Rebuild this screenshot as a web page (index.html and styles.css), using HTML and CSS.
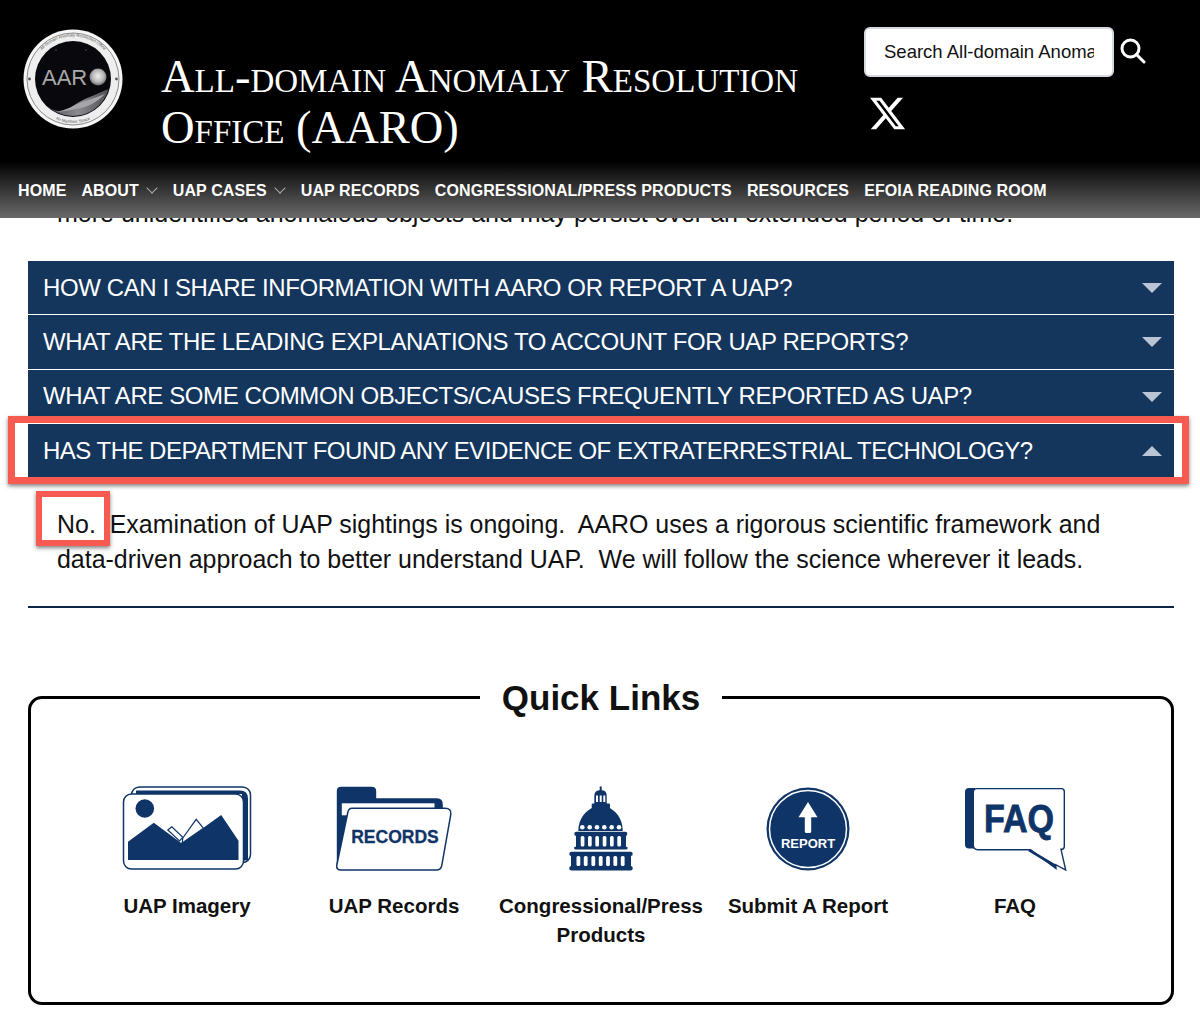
FILE: index.html
```html
<!DOCTYPE html>
<html lang="en">
<head>
    <meta charset="UTF-8">
    <meta name="viewport" content="width=device-width, initial-scale=1.0">
    <title>All-domain Anomaly Resolution Office (AARO)</title>
    <link rel="stylesheet" href="styles.css">
</head>
<body>
    <header class="site-header">
        <div class="header-top">
            <svg class="logo" viewBox="0 0 100 104" aria-label="AARO seal">
                <defs>
                    <radialGradient id="orb" cx="50%" cy="45%" r="55%">
                        <stop offset="0%" stop-color="#f0f0f0"/>
                        <stop offset="65%" stop-color="#b5b5b5"/>
                        <stop offset="100%" stop-color="#666"/>
                    </radialGradient>
                    <linearGradient id="wave" x1="0" x2="1" y1="0" y2="0">
                        <stop offset="0%" stop-color="#3a3a40"/>
                        <stop offset="55%" stop-color="#8a8a90"/>
                        <stop offset="100%" stop-color="#45454a"/>
                    </linearGradient>
                    <clipPath id="disc"><circle cx="50" cy="52" r="37"/></clipPath>
                    <path id="seal-top" d="M7.500 52a42.500 42.500 0 0 1 85 0"/>
                    <path id="seal-bottom" d="M21 85a44 44 0 0 0 58 0"/>
                </defs>
                <circle cx="50" cy="52" r="49.500" fill="#f6f6f6"/>
                <circle cx="50" cy="52" r="46" fill="#eeeeee" stroke="#444" stroke-width=".6"/>
                <circle cx="50" cy="52" r="38" fill="#08080d"/>
                <g clip-path="url(#disc)">
                    <path d="M12 70c8 5 16 14 24 14 10 0 18-9 28-13 9-3 17-8 26-10v12c-8 3-16 13-26 15-10 2-20 3-30 2-10-2-18-10-22-20z" fill="url(#wave)"/>
                    <path d="M30 85c12 0 22-8 32-11 8-2 14-5 20-7-6 6-14 12-24 14-10 2-20 4-28 4z" fill="#a5a5aa"/>
                </g>
                <circle cx="33" cy="23" r=".7" fill="#666"/>
                <circle cx="63" cy="23" r=".7" fill="#666"/>
                <circle cx="6.500" cy="52" r="1.400" fill="#555"/>
                <circle cx="93.500" cy="52" r="1.400" fill="#555"/>
                <circle cx="75" cy="50" r="8.500" fill="url(#orb)"/>
                <text class="logo-word" x="19" y="58">AAR</text>
                <text class="logo-ring"><textPath href="#seal-top" startOffset="50%" text-anchor="middle">All-domain Anomaly Resolution Office</textPath></text>
                <text class="logo-ring"><textPath href="#seal-bottom" startOffset="50%" text-anchor="middle">Air Maritime Space</textPath></text>
            </svg>
            <h1 class="site-title">All-domain Anomaly Resolution Office (AARO)</h1>
            <div class="header-tools">
                <div class="search-row">
                    <input class="search-input" type="text" placeholder="Search All-domain Anomaly Resolution Office">
                    <svg class="search-icon" viewBox="0 0 26 26" aria-label="Search">
                        <circle cx="10.500" cy="10.500" r="8.500"/>
                        <path d="M16.500 16.500l7.500 7.500"/>
                    </svg>
                </div>
                <svg class="x-icon" viewBox="0 0 24 24" aria-label="X">
                    <path d="M18.244 2.25h3.308l-7.227 8.26 8.502 11.24H16.17l-5.214-6.817L4.99 21.75H1.68l7.73-8.835L1.254 2.25H8.08l4.713 6.231zm-1.161 17.52h1.833L7.084 4.126H5.117z"/>
                </svg>
            </div>
        </div>
        <nav class="main-nav">
            <a href="#">HOME</a>
            <a href="#" class="has-sub">ABOUT</a>
            <a href="#" class="has-sub">UAP CASES</a>
            <a href="#">UAP RECORDS</a>
            <a href="#">CONGRESSIONAL/PRESS PRODUCTS</a>
            <a href="#">RESOURCES</a>
            <a href="#">EFOIA READING ROOM</a>
        </nav>
    </header>

    <main class="content">
        <p class="answer clipped">more unidentified anomalous objects and may persist over an extended period of time.</p>

        <div class="accordion">
            <div class="acc-row">HOW CAN I SHARE INFORMATION WITH AARO OR REPORT A UAP?</div>
            <div class="acc-row">WHAT ARE THE LEADING EXPLANATIONS TO ACCOUNT FOR UAP REPORTS?</div>
            <div class="acc-row">WHAT ARE SOME COMMON OBJECTS/CAUSES FREQUENTLY REPORTED AS UAP?</div>
            <div class="acc-row open marked">HAS THE DEPARTMENT FOUND ANY EVIDENCE OF EXTRATERRESTRIAL TECHNOLOGY?</div>
        </div>
        <p class="answer"><span class="marked-word">No.</span>&nbsp; Examination of UAP sightings is ongoing.&nbsp; AARO uses a rigorous scientific framework and data-driven approach to better understand UAP.&nbsp; We will follow the science wherever it leads.</p>
        <hr class="rule">

        <fieldset class="quick-links">
            <legend>Quick Links</legend>
            <div class="link-grid">
                <a href="#" class="link-item">
                    <svg class="link-icon" viewBox="0 0 130 86">
                        <rect x="9.500" y="2" width="119" height="75.500" rx="8" fill="#fff" stroke="#0f3468" stroke-width="1.500"/>
                        <path d="M14 5.500h104q8 0 8 8v62h-6V9H14z" fill="#0f3468"/>
                        <rect x="1.500" y="9" width="120" height="75" rx="8" fill="#fff" stroke="#0f3468" stroke-width="1.500"/>
                        <circle cx="22.800" cy="23.500" r="9.300" fill="#0f3468"/>
                        <path d="M6 75V56.700l25.800-19 27.400 20.300 21.600-14.700L99.200 30l17.300 25.700V75z" fill="#0f3468"/>
                        <path d="M45.800 45l4-3.300 11 10.600-3.300 3.700zM60.800 53L74.200 34.300l7.300 9-21.300 14.700z" fill="#fff" stroke="#0f3468" stroke-width="1.200"/>
                    </svg>
                    <span>UAP Imagery</span>
                </a>
                <a href="#" class="link-item">
                    <svg class="link-icon" viewBox="0 0 130 86">
                        <path d="M7.800 80V6q0-4.300 4.300-4.300h30.600q4.500 0 4.500 4.500v7.100h60.800q5.800 0 5.800 6V30H20L9 82z" fill="#0f3468"/>
                        <rect x="12.800" y="18.300" width="92.700" height="12" fill="#fff"/>
                        <path d="M23 23.300h93q6.500 0 5.800 6l-9 51q-.8 4.700-5.500 4.700H12q-5 0-4.200-5l11-52.500q.8-4.200 4.200-4.200z" fill="#fff" stroke="#0f3468" stroke-width="1.500"/>
                        <text class="icon-word records-word" x="66" y="57.700">RECORDS</text>
                    </svg>
                    <span>UAP Records</span>
                </a>
                <a href="#" class="link-item">
                    <svg class="link-icon" viewBox="0 0 130 86">
                        <rect x="63.700" y="1.500" width="2" height="5" fill="#0f3468"/>
                        <path d="M58.300 20V11q0-6 6.400-6t6 6v9z" fill="#0f3468"/>
                        <path d="M60 10.500h2v6.500h-2zM63.700 10.500h2v6.500h-2zM67.300 10.500h2v6.500h-2z" fill="#fff"/>
                        <rect x="55.700" y="18.500" width="18.300" height="5" rx="1" fill="#0f3468"/>
                        <path d="M42.300 46c0-13 8-21 16-24h13c8 3 15.400 11 15.400 24z" fill="#0f3468"/>
                        <g fill="#fff">
                            <circle cx="46.300" cy="42.300" r="2.300"/><circle cx="53.700" cy="42.300" r="2.300"/><circle cx="61" cy="42.300" r="2.300"/>
                            <circle cx="68.300" cy="42.300" r="2.300"/><circle cx="75.700" cy="42.300" r="2.300"/><circle cx="83" cy="42.300" r="2.300"/>
                        </g>
                        <rect x="38.300" y="46.700" width="53" height="4.300" rx="2" fill="#0f3468"/>
                        <rect x="40" y="50" width="50" height="12" fill="#0f3468"/>
                        <rect x="38" y="61.700" width="53.700" height="2.800" rx="1.400" fill="#0f3468"/>
                        <rect x="33.300" y="66.700" width="63.400" height="4.300" rx="2" fill="#0f3468"/>
                        <rect x="35" y="70" width="60" height="12" fill="#0f3468"/>
                        <rect x="33.300" y="81" width="63.400" height="4.500" rx="2" fill="#0f3468"/>
                        <g fill="#fff">
                            <rect x="44.700" y="51" width="3.700" height="10.500" rx="1.500"/><rect x="52" y="51" width="3.700" height="10.500" rx="1.500"/>
                            <rect x="59.300" y="51" width="3.700" height="10.500" rx="1.500"/><rect x="66.700" y="51" width="3.700" height="10.500" rx="1.500"/>
                            <rect x="74" y="51" width="3.700" height="10.500" rx="1.500"/><rect x="81.300" y="51" width="3.700" height="10.500" rx="1.500"/>
                            <rect x="40.500" y="71" width="3.800" height="10" rx="1.500"/><rect x="47.800" y="71" width="3.800" height="10" rx="1.500"/>
                            <rect x="55.400" y="71" width="3.800" height="10" rx="1.500"/><rect x="62.800" y="71" width="3.800" height="10" rx="1.500"/>
                            <rect x="70.100" y="71" width="3.800" height="10" rx="1.500"/><rect x="77.400" y="71" width="3.800" height="10" rx="1.500"/>
                            <rect x="84.800" y="71" width="3.800" height="10" rx="1.500"/>
                        </g>
                    </svg>
                    <span>Congressional/Press Products</span>
                </a>
                <a href="#" class="link-item">
                    <svg class="link-icon" viewBox="0 0 130 86">
                        <circle cx="65" cy="44" r="41.500" fill="#0f3468"/>
                        <circle cx="65" cy="44" r="38.500" fill="none" stroke="#fff" stroke-width="1.500"/>
                        <path d="M65 17l9.500 15.300h-6.300v14.200q0 1.500-1.500 1.500h-3.400q-1.500 0-1.500-1.500V32.300h-6.300z" fill="#fff"/>
                        <text class="icon-word report-word" x="65" y="63">REPORT</text>
                    </svg>
                    <span>Submit A Report</span>
                </a>
                <a href="#" class="link-item">
                    <svg class="link-icon" viewBox="0 0 130 86">
                        <path d="M25 3H19q-4 0-4 4v52.500q0 4 4 4h6z" fill="#0f3468"/>
                        <path d="M27 3.600h84.500q2.800 0 2.800 2.800v55q0 2.900-3.300 2.900l4.700 20.700-10-5.300.3 3.800-25.500-18.800H28q-4.700 0-4.700-4.700V7.300q0-3.700 3.700-3.700z" fill="#fff" stroke="#0f3468" stroke-width="1.400"/>
                        <path d="M80 64.300l25.800 15.200.2 3.600L78 66z" fill="#0f3468"/>
                        <text class="icon-word faq-word" x="34" y="46.700" textLength="70" lengthAdjust="spacingAndGlyphs">FAQ</text>
                    </svg>
                    <span>FAQ</span>
                </a>
            </div>
        </fieldset>
    </main>
</body>
</html>
```

FILE: styles.css
```css
* {
    box-sizing: border-box;
}
body {
    margin: 0;
    font-family: "Liberation Sans", Arial, sans-serif;
    background: white;
    color: #111;
}
.site-header {
    position: relative;
    z-index: 2;
    height: 218px;
    background: linear-gradient(#000 74%, #6a6a6a 100%);
    color: white;
}
.header-top {
    display: flex;
    height: 172px;
    padding: 27px 0 0 23px;
}
.logo {
    width: 100px;
    height: 104px;
    flex-shrink: 0;
}
.logo-word {
    font-size: 22px;
    fill: #a8a8a8;
}
.logo-ring {
    font-size: 4.200px;
    fill: #555;
}
.site-title {
    width: 703px;
    margin: 24px 0 0 38px;
    font-family: "Liberation Serif", "Times New Roman", serif;
    font-size: 46.500px;
    font-weight: normal;
    font-variant: small-caps;
    line-height: 51px;
}
.search-row {
    display: flex;
    align-items: center;
    gap: 6px;
}
.search-input {
    width: 250px;
    height: 50px;
    padding: 0 18px;
    border: 2px solid #d5d8de;
    border-radius: 6px;
    background: white;
    font-family: "Liberation Sans", Arial, sans-serif;
    font-size: 18.500px;
}
.search-input::placeholder {
    color: #111;
    opacity: 1;
}
.search-icon {
    width: 26px;
    height: 26px;
    margin-top: -2px;
    fill: none;
    stroke: white;
    stroke-width: 3;
    stroke-linecap: round;
}
.x-icon {
    display: block;
    width: 39px;
    height: 39px;
    margin: 17px 0 0 4px;
    fill: white;
}
.main-nav {
    display: flex;
    gap: 15px;
    padding-left: 18px;
    font-size: 16px;
    font-weight: bold;
    letter-spacing: 0.1px;
    line-height: 38px;
}
.main-nav a {
    color: white;
    text-decoration: none;
}
.has-sub::after {
    content: "";
    display: inline-block;
    width: 7px;
    height: 7px;
    margin: 0 2px 4px 9px;
    border-right: 1.500px solid #aaa;
    border-bottom: 1.500px solid #aaa;
    transform: rotate(45deg);
}
.content {
    margin-top: -22px;
    padding: 0 26px 0 28px;
}
.answer {
    margin: 0;
    padding: 0 60px 0 29px;
    font-size: 24.950px;
    line-height: 35px;
}
.clipped {
    padding-right: 0;
    font-size: 25px;
}
.accordion {
    margin: 30px 0 0;
}
.acc-row {
    position: relative;
    display: flex;
    align-items: center;
    height: 53.400px;
    margin-bottom: 1px;
    padding-left: 15px;
    background: #14365d;
    color: white;
    font-size: 24px;
    letter-spacing: -0.4px;
}
.acc-row::after {
    content: "";
    position: absolute;
    right: 12px;
    top: 22px;
    border-left: 10px solid transparent;
    border-right: 10px solid transparent;
    border-top: 10px solid #b9c4d4;
}
.acc-row.open {
    letter-spacing: -0.52px;
}
.acc-row.open::after {
    border-top: 0;
    border-bottom: 10px solid #b9c4d4;
}
.marked::before {
    content: "";
    position: absolute;
    top: -8px;
    left: -20px;
    right: -15px;
    bottom: -6px;
    border: 7px solid #f65a50;
    box-shadow: 0 2px 4px rgba(0, 0, 0, 0.5);
}
.accordion + .answer {
    margin-top: 29.500px;
}
.marked-word {
    position: relative;
}
.marked-word::before {
    content: "";
    position: absolute;
    top: -19px;
    left: -21px;
    right: -14px;
    bottom: -8px;
    border: 6px solid #f65a50;
    box-shadow: 0 2px 4px rgba(0, 0, 0, 0.5);
}
.rule {
    height: 1.500px;
    margin: 29px 0 0;
    border: 0;
    background: #0b2545;
}
.quick-links {
    height: 327px;
    margin: 70px 0 0;
    padding: 0;
    border: 3px solid black;
    border-radius: 14px;
}
.quick-links legend {
    margin: 0 auto;
    padding: 0 22px;
    font-size: 35px;
    font-weight: bold;
}
.link-grid {
    display: grid;
    grid-template-columns: repeat(5, 207px);
    justify-content: center;
    padding-top: 67px;
}
.link-item {
    display: flex;
    flex-direction: column;
    align-items: center;
    color: #111;
    text-align: center;
    text-decoration: none;
    font-size: 20.500px;
    font-weight: bold;
    line-height: 29px;
}
.link-icon {
    width: 130px;
    height: 86px;
    margin-bottom: 20px;
}
.icon-word {
    font-family: "Liberation Sans", Arial, sans-serif;
    font-weight: bold;
}
.records-word {
    font-size: 17.500px;
    fill: #0f3468;
    stroke: #0f3468;
    stroke-width: 0.3;
    text-anchor: middle;
}
.report-word {
    font-size: 13px;
    fill: white;
    text-anchor: middle;
}
.faq-word {
    font-size: 38.500px;
    fill: #0f3468;
    stroke: #0f3468;
    stroke-width: 0.8;
}
```
